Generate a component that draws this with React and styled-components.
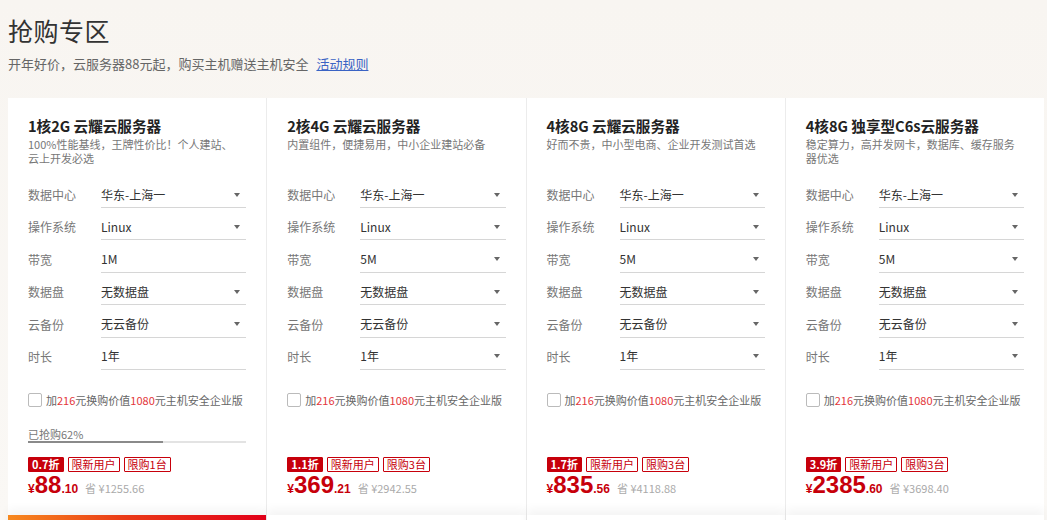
import React from "react";
import styled, { createGlobalStyle } from "styled-components";

const Global = createGlobalStyle`
  html, body { margin: 0; padding: 0; }
  body {
    background: linear-gradient(180deg, #f8f5f1 0%, #faf8f5 100%);
    font-family: "Noto Sans CJK SC", "Noto Sans", sans-serif;
    color: #333;
    overflow: hidden;
  }
`;

const Page = styled.div`
  width: 1047px;
  height: 520px;
  overflow: hidden;
  padding: 0 0 0 8px;
  box-sizing: border-box;
`;

const Title = styled.h1`
  margin: 0;
  padding-top: 12px;
  font-size: 25px;
  line-height: 36px;
  font-weight: 400;
  color: #333;
  letter-spacing: 0.5px;
`;

const Subtitle = styled.p`
  margin: 8px 0 0;
  font-size: 13px;
  line-height: 16px;
  color: #666;
`;

const Link = styled.a`
  margin-left: 8px;
  color: #3a63c4;
  text-decoration: underline;
`;

const Cards = styled.div`
  margin-top: 26px;
  width: 1036px;
  display: grid;
  grid-template-columns: repeat(4, 1fr);
  gap: 1px;
  background: #ececec;
`;

const Card = styled.div`
  background: #fff;
  display: flex;
  flex-direction: column;
  height: 440px;
`;

const Body = styled.div`
  padding: 18px 20px 0;
  display: flex;
  flex-direction: column;
`;

const CardTitle = styled.div`
  font-size: 14.6px;
  line-height: 20px;
  font-weight: 700;
  color: #222;
`;

const Desc = styled.div`
  margin-top: 1px;
  width: 212px;
  height: 28px;
  font-size: 11px;
  line-height: 14px;
  color: #777;
`;

const Form = styled.div`
  margin-top: 17px;
  display: grid;
  grid-auto-rows: 32.4px;
`;

const Row = styled.div`
  display: grid;
  grid-template-columns: 73px 1fr;
  align-items: start;
`;

const Label = styled.div`
  height: 26px;
  line-height: 26px;
  font-size: 12px;
  color: #777;
`;

const Value = styled.div`
  height: 25px;
  line-height: 26px;
  font-size: 12px;
  color: #333;
  border-bottom: 1px solid #d6d6d6;
  display: flex;
  justify-content: space-between;
  align-items: center;
  padding-right: 6px;
`;

const Arrow = styled.span`
  width: 0;
  height: 0;
  border-left: 3px solid transparent;
  border-right: 3px solid transparent;
  border-top: 4px solid #666;
`;

const Check = styled.label`
  margin-top: 16px;
  height: 16px;
  display: flex;
  align-items: center;
  font-size: 11px;
  color: #666;
`;

const Box = styled.span`
  width: 12px;
  height: 12px;
  border: 1px solid #bbb;
  border-radius: 2px;
  margin-right: 4px;
  background: #fff;
`;

const Red = styled.span`
  color: #e3363a;
`;

const ProgressArea = styled.div`
  height: 35px;
  display: flex;
  flex-direction: column;
  justify-content: flex-end;
`;

const ProgressText = styled.div`
  font-size: 11px;
  line-height: 14px;
  color: #777;
`;

const Track = styled.div`
  height: 2px;
  background: #e3e3e3;
`;

const Fill = styled.div`
  height: 100%;
  background: #8a8a8a;
`;

const Tags = styled.div`
  margin-top: 14px;
  display: flex;
  gap: 4px;
  height: 15px;
`;

const Tag = styled.span`
  display: inline-flex;
  align-items: center;
  height: 15px;
  box-sizing: border-box;
  padding: 0 3px;
  font-size: 11px;
  line-height: 13px;
  border: 1px solid #c7000b;
  border-radius: 1px;
  color: ${(p) => (p.$solid ? "#fff" : "#c7000b")};
  background: ${(p) => (p.$solid ? "#c7000b" : "#fff")};
  font-weight: ${(p) => (p.$solid ? 700 : 400)};
`;

const PriceRow = styled.div`
  margin-top: 0;
  height: 26px;
  display: flex;
  align-items: baseline;
  color: #c7000b;
  font-weight: 700;
  font-family: "Liberation Sans", "Noto Sans", sans-serif;
  line-height: 26px;
`;

const Yen = styled.span`
  font-size: 12px;
`;

const Big = styled.span`
  font-size: 24px;
`;

const Small = styled.span`
  font-size: 12px;
`;

const Save = styled.span`
  margin-left: 7px;
  font-size: 11px;
  font-weight: 400;
  color: #aaa;
  font-family: "Noto Sans CJK SC", "Noto Sans", sans-serif;
`;

const Buy = styled.div`
  margin-top: 17px;
  height: 40px;
  box-shadow: 0 -6px 10px rgba(0, 0, 0, 0.045);
  background: ${(p) =>
    p.$active ? "linear-gradient(90deg, #f7891f 0%, #ea3a17 45%, #e20019 100%)" : "#fff"};
`;

const cards = [
  {
    title: "1核2G 云耀云服务器",
    desc: "100%性能基线，王牌性价比！个人建站、云上开发必选",
    bw: "1M",
    fixed: true,
    progress: 62,
    discount: "0.7折",
    limit: "限购1台",
    big: "88",
    small: ".10",
    save: "省 ¥1255.66",
  },
  {
    title: "2核4G 云耀云服务器",
    desc: "内置组件，便捷易用，中小企业建站必备",
    bw: "5M",
    discount: "1.1折",
    limit: "限购3台",
    big: "369",
    small: ".21",
    save: "省 ¥2942.55",
  },
  {
    title: "4核8G 云耀云服务器",
    desc: "好而不贵，中小型电商、企业开发测试首选",
    bw: "5M",
    discount: "1.7折",
    limit: "限购3台",
    big: "835",
    small: ".56",
    save: "省 ¥4118.88",
  },
  {
    title: "4核8G 独享型C6s云服务器",
    desc: "稳定算力，高并发网卡，数据库、缓存服务器优选",
    bw: "5M",
    discount: "3.9折",
    limit: "限购3台",
    big: "2385",
    small: ".60",
    save: "省 ¥3698.40",
  },
];

function Field({ label, value, arrow }) {
  return (
    <Row>
      <Label>{label}</Label>
      <Value>
        <span>{value}</span>
        {arrow && <Arrow />}
      </Value>
    </Row>
  );
}

function ProductCard({ c, active }) {
  return (
    <Card>
      <Body>
        <CardTitle>{c.title}</CardTitle>
        <Desc>{c.desc}</Desc>
        <Form>
          <Field label="数据中心" value="华东-上海一" arrow />
          <Field label="操作系统" value="Linux" arrow />
          <Field label="带宽" value={c.bw} arrow={!c.fixed} />
          <Field label="数据盘" value="无数据盘" arrow />
          <Field label="云备份" value="无云备份" arrow />
          <Field label="时长" value="1年" arrow={!c.fixed} />
        </Form>
        <Check>
          <Box />
          加<Red>216</Red>元换购价值<Red>1080</Red>元主机安全企业版
        </Check>
        <ProgressArea>
          {c.progress != null && (
            <>
              <ProgressText>已抢购{c.progress}%</ProgressText>
              <Track>
                <Fill style={{ width: `${c.progress}%` }} />
              </Track>
            </>
          )}
        </ProgressArea>
        <Tags>
          <Tag $solid>{c.discount}</Tag>
          <Tag>限新用户</Tag>
          <Tag>{c.limit}</Tag>
        </Tags>
        <PriceRow>
          <Yen>¥</Yen>
          <Big>{c.big}</Big>
          <Small>{c.small}</Small>
          <Save>{c.save}</Save>
        </PriceRow>
      </Body>
      <Buy $active={active} />
    </Card>
  );
}

export default function App() {
  return (
    <Page>
      <Global />
      <Title>抢购专区</Title>
      <Subtitle>
        开年好价，云服务器88元起，购买主机赠送主机安全
        <Link href="#">活动规则</Link>
      </Subtitle>
      <Cards>
        {cards.map((c, i) => (
          <ProductCard key={i} c={c} active={i === 0} />
        ))}
      </Cards>
    </Page>
  );
}
